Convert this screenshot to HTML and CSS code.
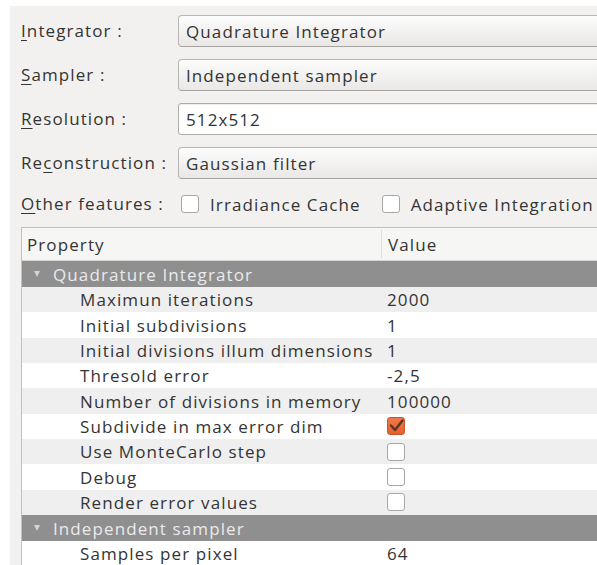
FILE: index.html
```html
<!DOCTYPE html>
<html>
<head>
<meta charset="utf-8">
<title>Render settings</title>
<link rel="stylesheet" href="styles.css">
</head>
<body>
<div class="window">
  <div class="form">
    <label class="lbl"><u>I</u>ntegrator :</label>
    <div class="combo">Quadrature Integrator</div>

    <label class="lbl"><u>S</u>ampler :</label>
    <div class="combo">Independent sampler</div>

    <label class="lbl"><u>R</u>esolution :</label>
    <div class="edit">512x512</div>

    <label class="lbl">Re<u>c</u>onstruction :</label>
    <div class="combo">Gaussian filter</div>

    <label class="lbl"><u>O</u>ther features :</label>
    <div class="checks">
      <span class="check"><span class="box"></span>Irradiance Cache</span>
      <span class="check"><span class="box"></span>Adaptive Integration</span>
    </div>
  </div>

  <div class="props">
    <div class="thead">
      <div class="th name-col">Property</div>
      <div class="th val-col">Value</div>
    </div>

    <div class="group"><span class="tri"></span>Quadrature Integrator</div>
    <div class="row alt"><div class="name">Maximun iterations</div><div class="val">2000</div></div>
    <div class="row"><div class="name">Initial subdivisions</div><div class="val">1</div></div>
    <div class="row alt"><div class="name">Initial divisions illum dimensions</div><div class="val">1</div></div>
    <div class="row"><div class="name">Thresold error</div><div class="val">-2,5</div></div>
    <div class="row alt"><div class="name">Number of divisions in memory</div><div class="val">100000</div></div>
    <div class="row"><div class="name">Subdivide in max error dim</div><div class="val"><span class="box on"><svg viewBox="0 0 18 18" width="18" height="18"><path d="M4 8.5 L8 13 L15.5 3.5" fill="none" stroke="#5b3526" stroke-width="2.4" stroke-linecap="round" stroke-linejoin="round"/></svg></span></div></div>
    <div class="row alt"><div class="name">Use MonteCarlo step</div><div class="val"><span class="box"></span></div></div>
    <div class="row"><div class="name">Debug</div><div class="val"><span class="box"></span></div></div>
    <div class="row alt"><div class="name">Render error values</div><div class="val"><span class="box"></span></div></div>

    <div class="group"><span class="tri"></span>Independent sampler</div>
    <div class="row"><div class="name">Samples per pixel</div><div class="val">64</div></div>
  </div>
</div>
</body>
</html>
```

FILE: styles.css
```css
html, body {
  margin: 0;
  padding: 0;
  background: #ffffff;
  height: 565px;
  overflow: hidden;
}

body {
  font-family: "Open Sans", "Noto Sans", sans-serif;
  font-size: 17px;
  letter-spacing: 1.1px;
  color: #343434;
}

.window {
  margin: 6px 0 0 10px;
  padding: 9px 0 0 11px;
  background: #f2f1f0;
  height: 600px;
  overflow: hidden;
}

/* label / field form */
.form {
  display: grid;
  grid-template-columns: 157px 600px;
  grid-template-rows: 32px 32px 32px 32px 26px;
  row-gap: 12px;
  align-items: center;
}

.lbl {
  white-space: nowrap;
  line-height: 20px;
}

.lbl u {
  text-decoration: underline;
  text-decoration-thickness: 1px;
  text-underline-offset: 3px;
}

.combo,
.edit {
  box-sizing: border-box;
  height: 32px;
  padding: 0 0 0 7px;
  display: flex;
  align-items: center;
  border: 1px solid #b9b7b4;
  border-radius: 4px;
  white-space: nowrap;
}

.combo {
  background: linear-gradient(#fcfcfc, #f1f0ef 60%, #e9e8e7);
  border-bottom-color: #a6a4a1;
}

.edit {
  background: #ffffff;
  border-color: #aeaca9;
  border-radius: 3px;
  box-shadow: inset 0 1px 1px rgba(0, 0, 0, 0.08);
}

.checks {
  display: flex;
  align-items: center;
  gap: 21px;
  padding-left: 3px;
  white-space: nowrap;
}

.check {
  display: flex;
  align-items: center;
  gap: 11px;
}

.box {
  box-sizing: border-box;
  display: inline-block;
  width: 18px;
  height: 18px;
  background: #ffffff;
  border: 1px solid #a9a7a4;
  border-radius: 3px;
  flex: none;
}

.box.on {
  background: linear-gradient(#f07848, #e4622f);
  border-color: #c9542a;
  position: relative;
}

.box.on svg {
  position: absolute;
  left: -1px;
  top: -1px;
}

/* property browser */
.props {
  margin-top: 10px;
  width: 700px;
  border: 1px solid #c2c0bd;
  border-right: none;
  background: #ffffff;
}

.thead {
  display: grid;
  grid-template-columns: 359px 1fr;
  height: 32px;
  background: #f6f6f5;
  border-bottom: 1px solid #d6d5d3;
}

.th {
  display: flex;
  align-items: center;
  padding-left: 5px;
}

.th.val-col {
  border-left: 1px solid #dcdbd9;
  padding-left: 6px;
  margin: 2px 0;
}

.group {
  height: 26px;
  display: flex;
  align-items: center;
  background: #8f8f8f;
  color: #e9eaec;
  padding-left: 12px;
}

.tri {
  width: 0;
  height: 0;
  border-left: 3.5px solid transparent;
  border-right: 3.5px solid transparent;
  border-top: 6px solid #d4d4d4;
  margin-right: 13px;
}

.row {
  display: grid;
  grid-template-columns: 359px 1fr;
  height: 25.35px;
  align-items: center;
  background: #ffffff;
}

.row.alt {
  background: #efefef;
}

.name {
  padding-left: 58px;
  white-space: nowrap;
}

.val {
  padding-left: 6px;
  display: flex;
  align-items: center;
  white-space: nowrap;
}
```
